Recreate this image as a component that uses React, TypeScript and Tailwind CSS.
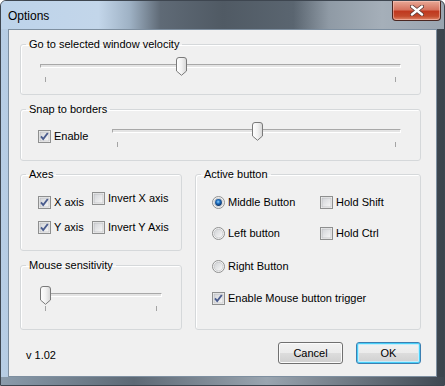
type SliderProps = {
  value: number;
};

const Thumb = () => (
  <svg width="11" height="19" viewBox="0 0 11 19">
    <defs>
      <linearGradient id="thumbFill" x1="0" y1="0" x2="1" y2="0">
        <stop offset="0" stopColor="#ffffff" />
        <stop offset="0.5" stopColor="#f2f2f2" />
        <stop offset="1" stopColor="#d6d6d6" />
      </linearGradient>
    </defs>
    <path
      d="M0.5 3 Q0.5 0.5 3 0.5 H8 Q10.5 0.5 10.5 3 V14 L5.5 18.3 L0.5 14 Z"
      fill="url(#thumbFill)"
      stroke="#7a7a7a"
    />
  </svg>
);

const Slider = ({ value }: SliderProps) => (
  <div className="relative h-[26px]">
    <div className="absolute left-0 right-0 top-[7px] h-[4px] border border-[#a8a8a8] border-b-white border-r-white bg-[#e4e4e4]" />
    <div className="absolute left-[5px] top-[20px] h-[5px] w-px bg-[#a4a4a4]" />
    <div className="absolute right-[5px] top-[20px] h-[5px] w-px bg-[#a4a4a4]" />
    <div
      className="absolute top-0 leading-none"
      style={{ left: `calc((100% - 10px) * ${value})` }}
    >
      <Thumb />
    </div>
  </div>
);

const CheckBox = ({ checked }: { checked?: boolean }) => (
  <svg width="13" height="13" viewBox="0 0 13 13" className="shrink-0">
    <defs>
      <linearGradient id="boxFill" x1="0" y1="0" x2="1" y2="1">
        <stop offset="0" stopColor="#d2d4d8" />
        <stop offset="1" stopColor="#f7f7f7" />
      </linearGradient>
    </defs>
    <rect x="0.5" y="0.5" width="12" height="12" fill="#f4f4f4" stroke="#8e8f8f" />
    <rect x="2" y="2" width="9" height="9" fill="url(#boxFill)" stroke="#b4b6ba" strokeWidth="0.6" />
    {checked && (
      <path
        d="M3 6.4 L5.2 9 L9.8 3"
        fill="none"
        stroke="#4a5c8e"
        strokeWidth="1.9"
      />
    )}
  </svg>
);

const Radio = ({ checked }: { checked?: boolean }) => (
  <svg width="13" height="13" viewBox="0 0 13 13" className="shrink-0">
    <defs>
      <linearGradient id="radioFill" x1="0" y1="0" x2="1" y2="1">
        <stop offset="0" stopColor="#cfd1d4" />
        <stop offset="1" stopColor="#fafafa" />
      </linearGradient>
      <radialGradient id="radioDot" cx="0.45" cy="0.4" r="0.6">
        <stop offset="0" stopColor="#8fd2ff" />
        <stop offset="0.45" stopColor="#1f6fc0" />
        <stop offset="1" stopColor="#0b2f60" />
      </radialGradient>
    </defs>
    <circle cx="6.5" cy="6.5" r="6" fill="#f6f6f6" stroke="#8e8f8f" />
    <circle cx="6.5" cy="6.5" r="4.4" fill="url(#radioFill)" stroke="#b8babd" strokeWidth="0.6" />
    {checked && <circle cx="6.5" cy="6.5" r="3.4" fill="url(#radioDot)" />}
  </svg>
);

const Option = ({
  label,
  checked,
  radio,
}: {
  label: string;
  checked?: boolean;
  radio?: boolean;
}) => (
  <div className="flex h-[13px] items-center gap-[3px] whitespace-nowrap">
    {radio ? <Radio checked={checked} /> : <CheckBox checked={checked} />}
    <span className="leading-[13px]">{label}</span>
  </div>
);

const Group = ({
  title,
  className,
  children,
}: {
  title: string;
  className: string;
  children?: React.ReactNode;
}) => (
  <fieldset
    className={`rounded-[3px] border border-[#d5d8da] shadow-[inset_1px_1px_0_#ffffff] ${className}`}
  >
    <legend className="ml-[5px] px-[3px] text-[11px] leading-[14px]">
      {title}
    </legend>
    {children}
  </fieldset>
);

export default function App() {
  return (
    <div className="flex h-[386px] w-[445px] flex-col overflow-hidden rounded-t-[6px] border border-[#3e4650] bg-[linear-gradient(90deg,#b7cde4_0%,#a9bfd6_25%,#8596a8_40%,#5d6772_60%,#4a535c_90%,#3b444d_100%)] font-['Liberation_Sans',Arial,sans-serif] text-black">
      <div className="flex h-[28px] shrink-0 items-start justify-between bg-[linear-gradient(90deg,#bdd3ea_0%,#c3d6ea_22%,#9fb2c5_29%,#5f6a76_36%,#505a64_50%,#5a6570_66%,#8f9aa5_74%,#a5afb9_86%,#9aa5b0_100%)] pr-[3px]">
        <span className="pl-[7px] pt-[8px] text-[12px] leading-[14px]">
          Options
        </span>
        <div className="flex h-[20px] w-[49px] items-center justify-center rounded-b-[4px] border border-t-0 border-[#4a2620] bg-[linear-gradient(#e8a896_0%,#d67460_45%,#c0391f_55%,#c34a2c_80%,#e0876a_100%)] shadow-[inset_0_0_0_1px_rgba(255,210,200,0.5)]">
          <svg width="14" height="11" viewBox="0 0 14 11">
            <path
              d="M2 1.5 L12 9.5 M12 1.5 L2 9.5"
              stroke="#5a3a36"
              strokeWidth="4"
              strokeLinecap="round"
            />
            <path
              d="M2 1.5 L12 9.5 M12 1.5 L2 9.5"
              stroke="#ffffff"
              strokeWidth="2.4"
              strokeLinecap="round"
            />
          </svg>
        </div>
      </div>

      <div className="mx-[7px] flex h-[348px] shrink-0 flex-col border border-[#7e8fa0] bg-[#f0f0f0] pb-[12px] pl-[11px] pr-[15px] pt-[7px] text-[11px]">
        <Group title="Go to selected window velocity" className="h-[58px]">
          <div className="mt-[6px] px-[19px]">
            <Slider value={0.3875} />
          </div>
        </Group>

        <Group title="Snap to borders" className="mt-[7px] h-[59px]">
          <div className="mt-[6px] flex items-start pl-[17px] pr-[19px]">
            <div className="mt-[8px] w-[74px]">
              <Option label="Enable" checked />
            </div>
            <div className="flex-1">
              <Slider value={0.5} />
            </div>
          </div>
        </Group>

        <div className="mt-[6px] flex gap-[13px]">
          <div className="flex w-[162px] flex-col gap-[7px]">
            <Group title="Axes" className="h-[84px]">
              <div className="flex pl-[17px]">
                <div className="flex w-[54px] flex-col gap-[12px] pt-[15px]">
                  <Option label="X axis" checked />
                  <Option label="Y axis" checked />
                </div>
                <div className="flex flex-col gap-[16px] pt-[11px]">
                  <Option label="Invert X axis" />
                  <Option label="Invert Y Axis" />
                </div>
              </div>
            </Group>
            <Group title="Mouse sensitivity" className="h-[72px]">
              <div className="mt-[14px] px-[19px]">
                <Slider value={0} />
              </div>
            </Group>
          </div>

          <Group title="Active button" className="h-[163px] flex-1">
            <div className="flex flex-col pl-[16px] pt-[15px]">
              <div className="flex">
                <div className="w-[108px]">
                  <Option label="Middle Button" checked radio />
                </div>
                <Option label="Hold Shift" />
              </div>
              <div className="mt-[18px] flex">
                <div className="w-[108px]">
                  <Option label="Left button" radio />
                </div>
                <Option label="Hold Ctrl" />
              </div>
              <div className="mt-[20px]">
                <Option label="Right Button" radio />
              </div>
              <div className="mt-[19px]">
                <Option label="Enable Mouse button trigger" checked />
              </div>
            </div>
          </Group>
        </div>

        <div className="mt-auto flex items-center justify-between">
          <span className="pl-[6px] pt-[4px] text-[11px]">v 1.02</span>
          <div className="flex gap-[13px]">
            <button className="h-[22px] w-[65px] rounded-[3px] border border-[#707070] bg-[linear-gradient(#f2f2f2_0%,#ebebeb_50%,#dddddd_50%,#cfcfcf_100%)] text-[11px] shadow-[inset_0_0_0_1px_#fbfbfb]">
              Cancel
            </button>
            <button className="h-[22px] w-[65px] rounded-[3px] border border-[#3c7fb1] bg-[linear-gradient(#f2f2f2_0%,#ebebeb_50%,#dddddd_50%,#cfcfcf_100%)] text-[11px] shadow-[inset_0_0_0_1px_#48cff8,inset_0_0_0_2px_#c4ecfb]">
              OK
            </button>
          </div>
        </div>
      </div>
      <div className="flex-1 bg-[linear-gradient(90deg,#8a9bab,#5d6975_30%,#9aa5b0_60%,#3f4852)]" />
    </div>
  );
}
